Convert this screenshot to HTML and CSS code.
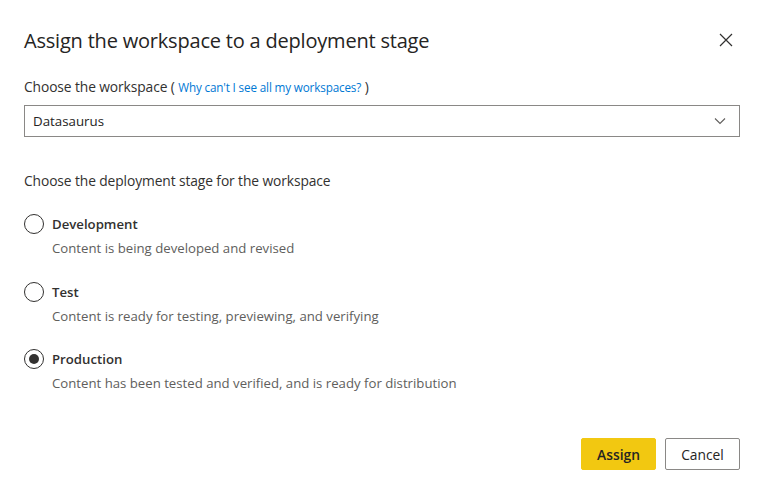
FILE: index.html
```html
<!DOCTYPE html>
<html>
<head>
<meta charset="utf-8">
<link rel="stylesheet" href="styles.css">
</head>
<body>
<div class="dialog">
  <div class="header">
    <h1 class="title">Assign the workspace to a deployment stage</h1>
    <button class="close" aria-label="Close">
      <svg width="14" height="14" viewBox="0 0 14 14"><path d="M1 1L13 13M13 1L1 13" stroke="#323130" stroke-width="1.2" fill="none"/></svg>
    </button>
  </div>
  <div class="field-label">Choose the workspace ( <a class="link" href="#">Why can't I see all my workspaces?</a> )</div>
  <div class="select">
    <span class="select-text">Datasaurus</span>
    <svg class="chev" width="12" height="8" viewBox="0 0 12 8"><path d="M1 1.5L6 6.5L11 1.5" stroke="#605e5c" stroke-width="1.1" fill="none"/></svg>
  </div>
  <div class="section-label">Choose the deployment stage for the workspace</div>
  <div class="options">
    <div class="option">
      <div class="opt-row"><span class="radio"></span><span class="opt-title">Development</span></div>
      <div class="opt-desc">Content is being developed and revised</div>
    </div>
    <div class="option">
      <div class="opt-row"><span class="radio"></span><span class="opt-title">Test</span></div>
      <div class="opt-desc">Content is ready for testing, previewing, and verifying</div>
    </div>
    <div class="option">
      <div class="opt-row"><span class="radio checked"></span><span class="opt-title">Production</span></div>
      <div class="opt-desc">Content has been tested and verified, and is ready for distribution</div>
    </div>
  </div>
  <div class="footer">
    <button class="btn primary">Assign</button>
    <button class="btn secondary">Cancel</button>
  </div>
</div>
</body>
</html>
```
FILE: styles.css
```css
* { box-sizing: border-box; }
html, body { margin: 0; padding: 0; background: #fff; }
body { font-family: "Open Sans", "Noto Sans", sans-serif; color: #323130; }
.dialog { width: 763px; height: 495px; padding: 24px 23px 0 24px; display: flex; flex-direction: column; }
.header { display: flex; justify-content: space-between; align-items: center; height: 32px; }
.title { margin: 0; font-size: 20px; font-weight: 400; letter-spacing: -0.2px; color: #252423; }
.close { background: none; border: none; padding: 0; margin-right: 7px; width: 14px; height: 14px; display: flex; }
.field-label { margin-top: 21px; font-size: 13.8px; color: #323130; letter-spacing: -0.1px; }
.link { color: #0078d4; text-decoration: none; font-size: 11.7px; letter-spacing: -0.15px; }
.select { margin-top: 9px; height: 32px; border: 1px solid #8a8886; display: flex; align-items: center; justify-content: space-between; padding: 0 13px 0 8px; }
.select-text { font-size: 13.3px; color: #252423; }
.section-label { margin-top: 34px; font-size: 13.8px; color: #323130; letter-spacing: -0.1px; }
.options { margin-top: 24px; display: flex; flex-direction: column; gap: 24.5px; }
.opt-row { display: flex; align-items: center; gap: 8px; height: 20px; }
.radio { width: 20px; height: 20px; border: 1px solid #323130; border-radius: 50%; display: flex; align-items: center; justify-content: center; }
.radio.checked::after { content: ""; width: 10px; height: 10px; border-radius: 50%; background: #323130; }
.opt-title { font-size: 13.2px; font-weight: 600; color: #323130; }
.opt-desc { margin-top: 5px; margin-left: 28px; font-size: 13.2px; color: #605e5c; }
.footer { margin-top: 46px; display: flex; justify-content: flex-end; gap: 9px; }
.btn { width: 75px; height: 32px; border-radius: 2px; font-family: inherit; font-size: 13.8px; font-weight: 600; color: #252423; }
.primary { background: #f2c811; border: 1px solid #f2c811; }
.secondary { background: #fff; border: 1px solid #8a8886; font-weight: 400; }
```
